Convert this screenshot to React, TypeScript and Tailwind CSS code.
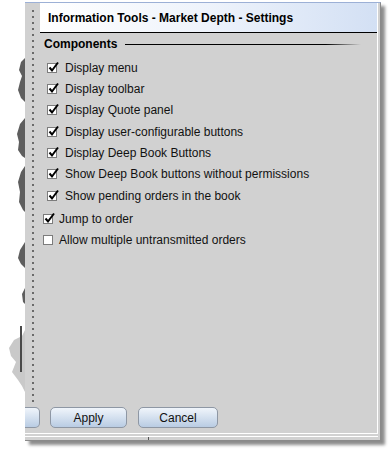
import React from 'react'

const indented = [
  'Display menu',
  'Display toolbar',
  'Display Quote panel',
  'Display user-configurable buttons',
  'Display Deep Book Buttons',
  'Show Deep Book buttons without permissions',
  'Show pending orders in the book',
]

function CheckBox({ checked }: { checked: boolean }) {
  return (
    <span className="relative block w-[10px] h-[10px] shrink-0 border border-[#7c7c7c] bg-white">
      {checked && (
        <svg className="absolute left-[0px] top-[-3px]" width="12" height="12" viewBox="0 0 12 12">
          <path d="M1.5 6.5 L4 9.5 L10 1.5" fill="none" stroke="#000" strokeWidth="2" />
        </svg>
      )}
    </span>
  )
}

function Row({ label, checked, inset }: { label: string; checked: boolean; inset?: boolean }) {
  return (
    <div className={`flex items-center h-[21.33px] ${inset ? 'pl-[7px]' : 'pl-[3px]'}`}>
      <CheckBox checked={checked} />
      <span className={`${inset ? 'ml-[8px]' : 'ml-[6px]'} text-[12px] text-[#111] whitespace-nowrap`}>{label}</span>
    </div>
  )
}

function TornEdge() {
  return (
    <svg className="absolute left-0 top-0" width="30" height="450" viewBox="0 0 30 450">
      <path
        d="M25 330 L22 336 L14 340 L9 348 L11 356 L16 362 L12 372 L18 380 L22 386 L25 392 Z"
        fill="#c9c9c9"
      />
      <path
        d="M25 58 L21 62 L19 70 L22 76 L20 82 L18 90 L21 98 L25 102 Z
           M25 118 L20 124 L17 134 L19 142 L18 150 L22 156 L25 158 Z
           M25 166 L21 172 L18 182 L20 192 L19 202 L23 210 L25 212 Z
           M25 242 L20 250 L18 258 L21 264 L25 268 Z
           M25 288 L22 294 L23 302 L25 304 Z"
        fill="#5e5e5e"
      />
      <rect x="20" y="326" width="2" height="46" fill="#4a4a4a" />
    </svg>
  )
}

function Btn({ children, w }: { children?: React.ReactNode; w: string }) {
  return (
    <div
      className={`${w} h-[21px] flex items-center justify-center rounded-[5px] border border-[#8e97a4] bg-linear-to-b from-[#f0f5fb] to-[#b9cce3] text-[12px] text-[#111]`}
    >
      {children}
    </div>
  )
}

export default function App() {
  return (
    <div className="relative w-[390px] h-[450px] overflow-hidden bg-white font-['Liberation_Sans',Arial,sans-serif]">
      <TornEdge />
      <div className="ml-[25px] mt-[2px] w-[356px] h-[439px] flex flex-col bg-[#d1d1d1] border-t border-t-[#9cb0d6] border-r border-b border-[#8a8a8a] shadow-[4px_4px_3px_rgba(0,0,0,0.45)]">
        <div className="mr-[2px] h-[432px] flex flex-col border-r border-b border-white">
          <div className="h-[400px] flex">
            {/* dotted gutter */}
            <div className="w-[15px] shrink-0">
              <div className="ml-[7px] mt-[7px] w-[2px] h-[392px] bg-[repeating-linear-gradient(to_bottom,#6a6a6a_0px,#6a6a6a_2px,transparent_2px,transparent_6px)]" />
            </div>

            <div className="flex-1 flex flex-col">
              <div className="h-[30px] flex items-center pl-[8px] bg-linear-to-r from-white via-[#eef3fb] to-[#d3e0f4] border-b border-black">
                <span className="text-[12px] font-bold text-black whitespace-nowrap">
                  Information Tools - Market Depth - Settings
                </span>
              </div>

              <div className="h-[22px] flex items-center pl-[4px]">
                <span className="text-[12px] font-bold text-black">Components</span>
                <div className="ml-[8px] mr-[16px] flex-1 h-px bg-linear-to-r from-black from-85% to-transparent" />
              </div>

              <div className="pt-[2px] flex flex-col">
                {indented.map((t) => (
                  <Row key={t} label={t} checked inset />
                ))}
                <div className="mt-[2px]">
                  <Row label="Jump to order" checked />
                  <Row label="Allow multiple untransmitted orders" checked={false} />
                </div>
              </div>
            </div>
          </div>

          <div className="pt-[4px] flex items-start">
            <div className="w-[15px] h-[21px] rounded-r-[5px] border border-l-0 border-[#8e97a4] bg-linear-to-b from-[#f0f5fb] to-[#b9cce3]" />
            <div className="ml-[10px]">
              <Btn w="w-[77px]">Apply</Btn>
            </div>
            <div className="ml-[11px]">
              <Btn w="w-[80px]">Cancel</Btn>
            </div>
          </div>
        </div>
        <div className="mr-[2px] flex-1 flex flex-col">
          <div className="mt-[2px] h-px bg-white" />
          <div className="ml-[123px] w-px h-[3px] bg-[#555]" />
        </div>
      </div>
    </div>
  )
}
